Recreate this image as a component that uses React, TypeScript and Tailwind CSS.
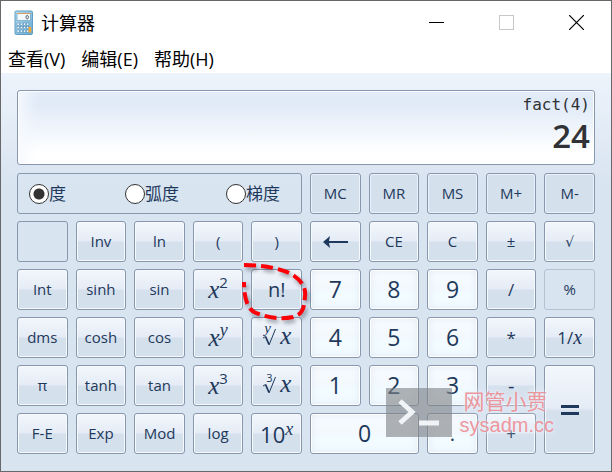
import type { ReactNode } from "react";

const KEY =
  "relative flex h-full w-full min-w-0 items-center justify-center rounded-[3px] border leading-none";
const FN =
  "border-[#8798ae] bg-linear-to-b from-[#f3f7fc] from-0% via-[#e5ecf6] via-48% to-[#d5e0ed] to-52% shadow-[inset_0_0_0_1px_#f7fafd]";
const MEM =
  "border-[#8798ae] bg-[#d5e0ed] shadow-[inset_0_0_0_1px_#ebf2f9]";
const NUM =
  "border-[#8798ae] bg-linear-to-b from-[#fafcff] from-0% via-[#f2f8fd] via-50% to-[#f2fbff] to-55% shadow-[inset_0_0_0_1px_#ffffff,inset_0_0_8px_#dfe8f3]";
const OFF = "border-[#b4c2d2] bg-transparent";

function Key({
  label,
  kind = FN,
  size = "text-[15px]",
  span = "",
  disabled = false,
  children,
}: {
  label: string;
  kind?: string;
  size?: string;
  span?: string;
  disabled?: boolean;
  children?: ReactNode;
}) {
  return (
    <div className={span}>
      <button type="button" aria-label={label} disabled={disabled} className={`${KEY} ${kind} ${size}`}>
        {children ?? label}
      </button>
    </div>
  );
}

function Num({ n }: { n: string }) {
  return <Key label={n} kind={NUM} size="text-[23px]" />;
}

function Power({ sup, italic = false }: { sup: string; italic?: boolean }) {
  return (
    <span className="flex items-start pb-1">
      <i className="mt-1 font-['Liberation_Serif',serif] text-[25px] leading-5">x</i>
      {italic ? (
        <i className="font-['Liberation_Serif',serif] text-[18px] leading-3">{sup}</i>
      ) : (
        <span className="text-[15px] leading-3">{sup}</span>
      )}
    </span>
  );
}

function Root({ degree, italic = false }: { degree: string; italic?: boolean }) {
  return (
    <span className="flex items-end gap-1 pb-1">
      <span className="relative h-5 w-3.5">
        {italic ? (
          <i className="absolute -top-1 left-0.5 font-['Liberation_Serif',serif] text-[15px] leading-3">{degree}</i>
        ) : (
          <span className="absolute -top-0.5 left-1 text-[11px] leading-3">{degree}</span>
        )}
        <svg className="absolute bottom-0 left-0" width="15" height="19" viewBox="0 0 15 19" fill="none" stroke="currentColor" aria-hidden="true">
          <path d="M1 11 L3.5 9.5" strokeWidth="1" />
          <path d="M3.5 9.5 L7 17.5" strokeWidth="1.8" />
          <path d="M7 18 L13.5 2" strokeWidth="1" />
        </svg>
      </span>
      <i className="font-['Liberation_Serif',serif] text-[25px] leading-5">x</i>
    </span>
  );
}

function CalcIcon() {
  return (
    <svg width="20" height="26" viewBox="0 0 20 26" aria-hidden="true">
      <defs>
        <linearGradient id="calcBody" x1="0" y1="0" x2="1" y2="1">
          <stop offset="0" stopColor="#b9def2" />
          <stop offset="1" stopColor="#65a9d2" />
        </linearGradient>
      </defs>
      <rect x="1" y="1" width="17.5" height="23.5" rx="1.2" fill="url(#calcBody)" stroke="#5f9dc2" />
      <rect x="3" y="3.5" width="13.5" height="7" fill="#f2f9fd" stroke="#78aaca" strokeWidth=".8" />
      <rect x="3" y="3" width="13.5" height="1" fill="#d79a58" />
      <ellipse cx="13.2" cy="7.2" rx="1.2" ry="1.8" fill="none" stroke="#4b5964" strokeWidth=".9" />
      <g fill="#f3faff" stroke="#4b86ae" strokeWidth=".5">
        {[13, 16.5, 20].map((y) =>
          [3, 6.2, 9.4, 12.6].map((x) => <rect key={`${x}-${y}`} x={x} y={y} width="2.2" height="2.2" />),
        )}
      </g>
      <rect x="14.6" y="17" width="2.6" height="5.6" fill="#f5a62c" />
    </svg>
  );
}

function Angle({ name, checked = false }: { name: string; checked?: boolean }) {
  return (
    <label className="flex items-center whitespace-nowrap text-[17px] leading-5">
      <input
        type="radio"
        name="angle"
        defaultChecked={checked}
        className="size-5 shrink-0 appearance-none rounded-full border border-[#333] bg-white checked:bg-[radial-gradient(circle,#333_0_5px,#fff_6px)]"
      />
      {name}
    </label>
  );
}

export default function App() {
  return (
    <main className="relative flex min-h-[472px] flex-col border border-[#68686b] bg-[#d9e4f1] font-['Open_Sans','Noto_Sans_CJK_SC',sans-serif] text-[#1e395b]">
      <header className="flex h-[43px] items-center bg-white pl-[13px] text-black">
        <CalcIcon />
        <h1 className="ml-[7px] flex-1 text-[18px] leading-6">计算器</h1>
        <button type="button" aria-label="最小化" className="flex h-full w-[70px] items-center justify-center">
          <svg width="15" height="15" aria-hidden="true"><path d="M0 7.5H15" stroke="#000" /></svg>
        </button>
        <button type="button" aria-label="最大化" disabled className="flex h-full w-[70px] items-center justify-center">
          <svg width="15" height="15" aria-hidden="true"><rect x=".5" y=".5" width="14" height="14" fill="none" stroke="#c8c8c8" /></svg>
        </button>
        <button type="button" aria-label="关闭" className="flex h-full w-[70px] items-center justify-center">
          <svg width="15" height="15" aria-hidden="true"><path d="M0 0L15 15M15 0L0 15" stroke="#000" strokeWidth="1.2" /></svg>
        </button>
      </header>
      <nav className="flex h-[29px] items-center gap-4 bg-white pl-[7px] text-[18px] leading-6 text-black">
        <button type="button">查看(V)</button>
        <button type="button">编辑(E)</button>
        <button type="button">帮助(H)</button>
      </nav>

      <section className="flex-1 bg-linear-to-b from-[#edf3fb] from-0% to-[#d9e4f1] to-28% px-4 pt-[17px] pb-4">
        <output className="flex h-[75px] flex-col items-end rounded-[3px] border border-[#8798ae] bg-linear-to-b from-[#e1ebf8] from-20% to-white to-85% pr-1 text-[#303236] shadow-[inset_0_0_0_1px_#fff,inset_14px_0_14px_-6px_#f6f9fe]">
          <span className="mt-1 font-['DejaVu_Sans_Mono',monospace] text-[16px] leading-5">fact(4)</span>
          <span className="font-['Open_Sans',sans-serif] text-[33px] leading-[42px] font-semibold">24</span>
        </output>

        <div className="mt-2 grid auto-rows-[41px] grid-cols-10 gap-x-2 gap-y-[7px]">
          <fieldset aria-label="角度单位" className="col-span-5 grid min-w-0 grid-cols-[96px_101px_1fr] items-center rounded-[3px] border border-[#8798ae] pl-[11px]">
            <Angle name="度" checked />
            <Angle name="弧度" />
            <Angle name="梯度" />
          </fieldset>
          <Key label="MC" kind={MEM} />
          <Key label="MR" kind={MEM} />
          <Key label="MS" kind={MEM} />
          <Key label="M+" kind={MEM} />
          <Key label="M-" kind={MEM} />

          <div className="rounded-[3px] border border-[#8798ae]" />
          <Key label="Inv" />
          <Key label="ln" />
          <Key label="(" />
          <Key label=")" />
          <Key label="退格">
            <svg width="25" height="12" viewBox="0 0 25 12" fill="currentColor" aria-hidden="true">
              <path d="M0 6L7 0L6 5H25V7H6L7 12Z" />
            </svg>
          </Key>
          <Key label="CE" />
          <Key label="C" />
          <Key label="±" />
          <Key label="√" size="font-['DejaVu_Sans'] text-[14px]" />

          <Key label="Int" />
          <Key label="sinh" />
          <Key label="sin" />
          <Key label="x²"><Power sup="2" /></Key>
          <div className="relative">
            <button type="button" className={`${KEY} ${FN} text-[20px]`}>n!</button>
            <svg className="pointer-events-none absolute -top-3 -left-3 z-10 drop-shadow-[2px_3px_2px_rgba(60,70,85,0.55)]" width="76" height="72" fill="none" stroke="#fb0007" strokeWidth="4" strokeDasharray="12 5" aria-hidden="true">
              <path d="M5 8C25 8 44 12 54 18C63 24 67 31 66 39C65 52 64 57 54 60C41 63 25 60 15 55C7 50 5 38 5 25" />
            </svg>
          </div>
          <Num n="7" />
          <Num n="8" />
          <Num n="9" />
          <Key label="/" size="text-[17px]" />
          <Key label="%" kind={OFF} disabled />

          <Key label="dms" />
          <Key label="cosh" />
          <Key label="cos" />
          <Key label="xʸ"><Power sup="y" italic /></Key>
          <Key label="ʸ√x"><Root degree="y" italic /></Key>
          <Num n="4" />
          <Num n="5" />
          <Num n="6" />
          <Key label="*" size="text-[17px]" />
          <Key label="1/x" size="text-[17px]">
            <span>1/<i className="font-['Liberation_Serif',serif] text-[20px] leading-4">x</i></span>
          </Key>

          <Key label="π" />
          <Key label="tanh" />
          <Key label="tan" />
          <Key label="x³"><Power sup="3" /></Key>
          <Key label="³√x"><Root degree="3" /></Key>
          <Num n="1" />
          <Num n="2" />
          <Num n="3" />
          <Key label="-" size="text-[20px]" />
          <Key label="=" span="row-span-2">
            <svg width="18" height="10" fill="currentColor" aria-hidden="true"><path d="M0 0H18V3H0ZM0 7H18V10H0Z" /></svg>
          </Key>

          <Key label="F-E" />
          <Key label="Exp" />
          <Key label="Mod" />
          <Key label="log" />
          <Key label="10ˣ" size="text-[22px]">
            <span className="flex items-start">10<i className="font-['Liberation_Serif',serif] text-[18px] leading-3">x</i></span>
          </Key>
          <Key label="0" kind={NUM} size="text-[23px]" span="col-span-2" />
          <Key label="." kind={NUM} size="text-[20px]" />
          <Key label="+" size="text-[17px]" />
        </div>
      </section>

      <aside className="pointer-events-none absolute right-[57px] bottom-[34px] z-20 flex items-center gap-2">
        <svg width="66" height="49" viewBox="0 0 66 49" fill="none" stroke="#f1f4f7" aria-hidden="true">
          <rect width="66" height="49" fill="#7f8386" fillOpacity=".62" stroke="none" />
          <path d="M14 13L26 24L14 35" strokeWidth="5" />
          <path d="M33 35H53" strokeWidth="5" />
        </svg>
        <div className="flex flex-col text-[#ee8b91]/90 [text-shadow:0_0_3px_#e9f0f8,0_0_6px_#e9f0f8]">
          <span className="pl-1 text-[21px] leading-6">网管小贾</span>
          <span className="font-['Liberation_Sans',sans-serif] text-[20px] leading-6">sysadm.cc</span>
        </div>
      </aside>
    </main>
  );
}
